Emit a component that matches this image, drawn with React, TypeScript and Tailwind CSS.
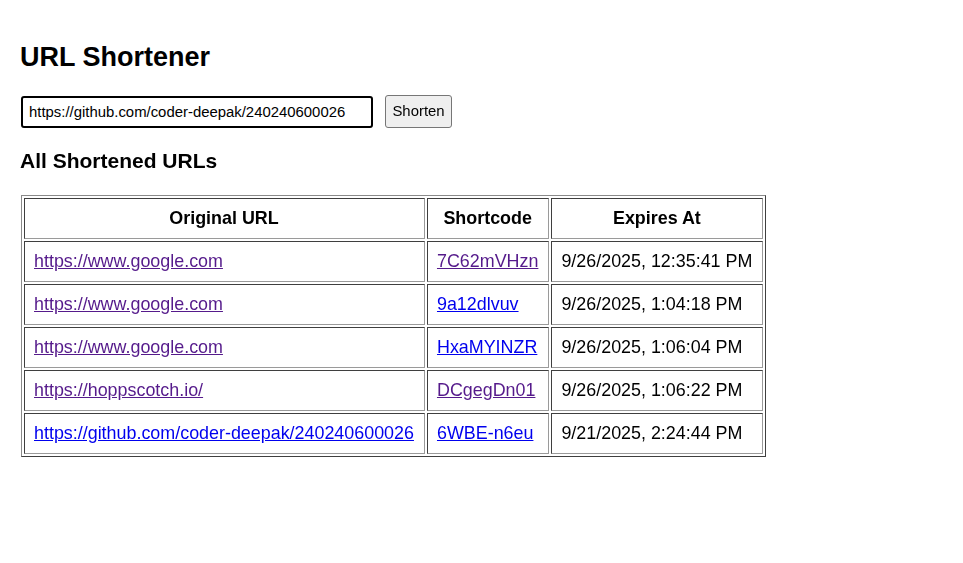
import { useState } from "react";

type Row = {
  url: string;
  urlVisited: boolean;
  code: string;
  codeVisited: boolean;
  expires: string;
};

const rows: Row[] = [
  { url: "https://www.google.com", urlVisited: true, code: "7C62mVHzn", codeVisited: true, expires: "9/26/2025, 12:35:41 PM" },
  { url: "https://www.google.com", urlVisited: true, code: "9a12dlvuv", codeVisited: false, expires: "9/26/2025, 1:04:18 PM" },
  { url: "https://www.google.com", urlVisited: true, code: "HxaMYINZR", codeVisited: false, expires: "9/26/2025, 1:06:04 PM" },
  { url: "https://hoppscotch.io/", urlVisited: true, code: "DCgegDn01", codeVisited: true, expires: "9/26/2025, 1:06:22 PM" },
  { url: "https://github.com/coder-deepak/240240600026", urlVisited: false, code: "6WBE-n6eu", codeVisited: false, expires: "9/21/2025, 2:24:44 PM" },
];

const cell =
  "border border-t-[#3f3f3f] border-l-[#3f3f3f] border-b-[#9a9a9a] border-r-[#9a9a9a] pl-[9px] pr-[10px] py-[10px] leading-[19px]";

export default function App() {
  const [url, setUrl] = useState("https://github.com/coder-deepak/240240600026");

  return (
    <div className="min-h-screen bg-white text-black pt-[42px] pl-[20px] font-['Liberation_Sans',Arial,sans-serif]">
      <h1 className="text-[27px] leading-[30px] font-bold">URL Shortener</h1>

      <div className="flex items-center mt-[23px] h-[33px]">
        <input
          autoFocus
          value={url}
          onChange={(e) => setUrl(e.target.value)}
          className="w-[352px] h-[32px] ml-[1px] px-[6px] border-2 border-black rounded-[3px] text-[14.9px] outline-none"
        />
        <button className="ml-[12px] h-[33px] w-[67px] bg-[#efefef] border border-[#767676] rounded-[3px] text-[14.9px]">
          Shorten
        </button>
      </div>

      <h2 className="mt-[21px] text-[21px] leading-[24px] font-bold">All Shortened URLs</h2>

      <table className="mt-[22px] ml-[1px] border-separate border-spacing-[2px] border border-t-[#8a8a8a] border-l-[#8a8a8a] border-b-[#3f3f3f] border-r-[#3f3f3f] text-[17.9px]">
        <thead>
          <tr>
            <th className={cell + " font-bold"}>Original URL</th>
            <th className={cell + " font-bold"}>Shortcode</th>
            <th className={cell + " font-bold"}>Expires At</th>
          </tr>
        </thead>
        <tbody>
          {rows.map((r, i) => (
            <tr key={i}>
              <td className={cell}>
                <a href="#" className={"underline " + (r.urlVisited ? "text-[#551a8b]" : "text-[#0000ee]")}>
                  {r.url}
                </a>
              </td>
              <td className={cell}>
                <a href="#" className={"underline " + (r.codeVisited ? "text-[#551a8b]" : "text-[#0000ee]")}>
                  {r.code}
                </a>
              </td>
              <td className={cell}>{r.expires}</td>
            </tr>
          ))}
        </tbody>
      </table>
    </div>
  );
}
